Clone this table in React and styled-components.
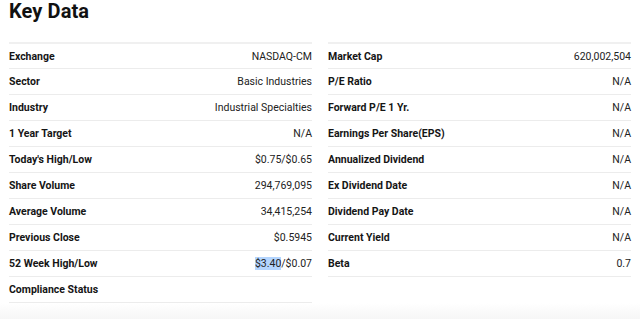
import React from 'react'
import styled, { createGlobalStyle } from 'styled-components'

const Global = createGlobalStyle`
  html, body {
    margin: 0;
    padding: 0;
    background: #fff;
  }
  body {
    font-family: Roboto, "Liberation Sans", Arial, sans-serif;
    color: #1a1a1a;
  }
`

const Page = styled.div`
  width: 640px;
  height: 319px;
  box-sizing: border-box;
  padding: 0 9px;
  background: linear-gradient(to bottom, #fff 0, #fff 303px, #f6f6f6 319px);
`

const Title = styled.h2`
  margin: 0;
  height: 42px;
  font-size: 20px;
  font-weight: 700;
  line-height: 23px;
  letter-spacing: 0.1px;
  color: #111;
`

const Columns = styled.div`
  display: grid;
  grid-template-columns: 303px 303px;
  column-gap: 16px;
  align-items: start;
`

const Table = styled.div`
  display: flex;
  flex-direction: column;
  border-bottom: 1px solid #ececec;
`

const Row = styled.div`
  display: flex;
  justify-content: space-between;
  align-items: center;
  height: 26px;
  box-sizing: border-box;
  border-top: ${p => (p.first ? '2px solid #f0f0f0' : '1px solid #ececec')};
  font-size: 10.5px;
`

const Label = styled.span`
  font-weight: 700;
  color: #151515;
`

const Value = styled.span`
  font-weight: 400;
  color: #222;
`

const Selected = styled.span`
  background: #b4d5fe;
`

const left = [
  ['Exchange', 'NASDAQ-CM'],
  ['Sector', 'Basic Industries'],
  ['Industry', 'Industrial Specialties'],
  ['1 Year Target', 'N/A'],
  ["Today's High/Low", '$0.75/$0.65'],
  ['Share Volume', '294,769,095'],
  ['Average Volume', '34,415,254'],
  ['Previous Close', '$0.5945'],
  ['52 Week High/Low', <><Selected>$3.40</Selected>/$0.07</>],
  ['Compliance Status', ''],
]

const right = [
  ['Market Cap', '620,002,504'],
  ['P/E Ratio', 'N/A'],
  ['Forward P/E 1 Yr.', 'N/A'],
  ['Earnings Per Share(EPS)', 'N/A'],
  ['Annualized Dividend', 'N/A'],
  ['Ex Dividend Date', 'N/A'],
  ['Dividend Pay Date', 'N/A'],
  ['Current Yield', 'N/A'],
  ['Beta', '0.7'],
]

function DataTable({ rows }) {
  return (
    <Table>
      {rows.map(([label, value], i) => (
        <Row key={label} first={i === 0}>
          <Label>{label}</Label>
          <Value>{value}</Value>
        </Row>
      ))}
    </Table>
  )
}

export default function App() {
  return (
    <Page>
      <Global />
      <Title>Key Data</Title>
      <Columns>
        <DataTable rows={left} />
        <DataTable rows={right} />
      </Columns>
    </Page>
  )
}
